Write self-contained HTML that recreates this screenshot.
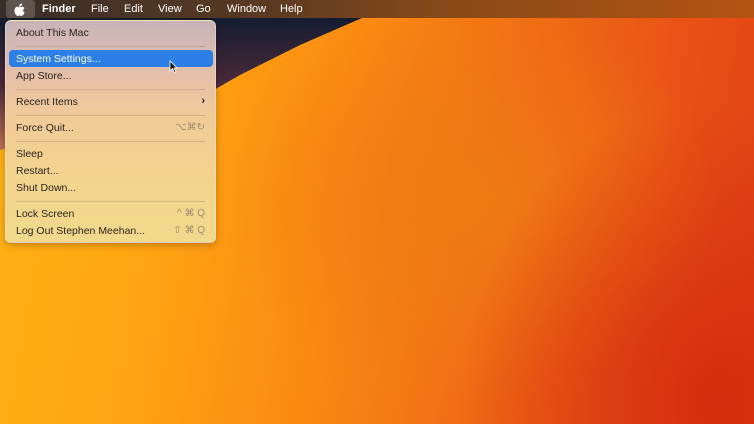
<!DOCTYPE html>
<html><head><meta charset="utf-8"><style>
*{margin:0;padding:0;box-sizing:border-box}
body{width:754px;height:424px;overflow:hidden;position:relative;font-family:"Liberation Sans",sans-serif;
background:radial-gradient(ellipse 260px 300px at 720px 400px,#d42e0e 0%,rgba(212,46,14,0) 100%),
radial-gradient(ellipse 250px 200px at 470px 200px,#f07a14 0%,rgba(240,122,20,0) 100%),
linear-gradient(100deg,#ffb414 0%,#ffa212 25%,#fa8a12 45%,#f06c14 65%,#e85016 85%,#e04014 100%);}
#bar{position:absolute;left:0;top:0;width:754px;height:18px;background:linear-gradient(90deg,#3a2e28 0%,#5a3a22 35%,#8a4a18 60%,#b45412 100%);color:#fff;font-size:11px;}
#bar span{position:absolute;top:3px}
#menu{position:absolute;left:5px;top:20px;width:211px;height:223px;border-radius:6px;
background:linear-gradient(180deg,#c7b4b9 0%,#e6c0a8 25%,#f2cb98 45%,#f3d48e 70%,#f2d98c 100%);
box-shadow:0 2px 8px rgba(0,0,0,0.25);border:1px solid rgba(255,255,255,0.3)}
.it{position:absolute;left:10px;font-size:10.5px;color:#2a2420}
.sc{position:absolute;right:10px;font-size:10px;color:#9c8c72}
.sep{position:absolute;left:10px;right:10px;height:1px;background:rgba(120,100,80,0.25)}
#hl{position:absolute;left:3px;top:29px;width:204px;height:17px;background:#2b7fe6;border-radius:4px}
</style></head><body>
<svg style="position:absolute;left:0;top:0" width="754" height="424">
<defs><linearGradient id="d" x1="0" y1="0" x2="0" y2="1"><stop offset="0" stop-color="#141c30"/><stop offset="0.5" stop-color="#4a2a3a"/><stop offset="1" stop-color="#c07050"/></linearGradient></defs>
<polygon points="0,18 362,18 300,45 240,75 205,95 0,150" fill="url(#d)"/>
</svg>
<div id="bar">
<div style="position:absolute;left:6px;top:0;width:29px;height:18px;background:rgba(255,255,255,0.18);border-radius:3px"></div>
<svg style="position:absolute;left:14px;top:3px" width="12" height="13" viewBox="0 0 12 14"><path fill="#fff" d="M8.2 0.5c0.1 1-0.3 1.9-0.9 2.5-0.6 0.7-1.4 1.1-2.2 1-0.1-0.9 0.3-1.9 0.9-2.5 0.6-0.6 1.5-1 2.2-1zM11 10.2c-0.3 0.8-0.7 1.5-1.2 2.2-0.6 0.8-1.2 1.6-2.1 1.6s-1.1-0.5-2.1-0.5-1.3 0.5-2.1 0.5c-0.9 0-1.6-0.9-2.2-1.7C0.1 10.6-0.5 7.6 0.7 5.7 1.3 4.7 2.3 4.1 3.3 4.1c0.9 0 1.6 0.6 2.3 0.6s1.6-0.7 2.7-0.6c0.5 0 1.8 0.2 2.6 1.4-2.2 1.3-1.8 4.3 0.1 4.7z"/></svg>
<span style="left:42px;font-weight:bold">Finder</span>
<span style="left:91px">File</span>
<span style="left:124px">Edit</span>
<span style="left:158px">View</span>
<span style="left:196px">Go</span>
<span style="left:227px">Window</span>
<span style="left:280px">Help</span>
</div>
<div id="menu">
<div class="it" style="top:6px">About This Mac</div>
<div class="sep" style="top:25px"></div>
<div id="hl"></div>
<div class="it" style="top:32px;color:#fff">System Settings...</div>
<div class="it" style="top:49px">App Store...</div>
<div class="sep" style="top:68px"></div>
<div class="it" style="top:75px">Recent Items</div>
<div class="sc" style="top:74px;color:#2a2420;font-size:11px;font-weight:bold">›</div>
<div class="sep" style="top:94px"></div>
<div class="it" style="top:101px">Force Quit...</div>
<div class="sc" style="top:101px">⌥⌘↻</div>
<div class="sep" style="top:120px"></div>
<div class="it" style="top:127px">Sleep</div>
<div class="it" style="top:144px">Restart...</div>
<div class="it" style="top:161px">Shut Down...</div>
<div class="sep" style="top:180px"></div>
<div class="it" style="top:187px">Lock Screen</div>
<div class="sc" style="top:187px">^ ⌘ Q</div>
<div class="it" style="top:204px">Log Out Stephen Meehan...</div>
<div class="sc" style="top:204px">⇧ ⌘ Q</div>
</div>
<svg style="position:absolute;left:169px;top:60px" width="9" height="14" viewBox="0 0 9 14"><path d="M1 1 L1 11 L3.5 8.5 L5.5 13 L7 12.3 L5 8 L8 8 Z" fill="#111" stroke="#fff" stroke-width="0.8"/></svg>
</body></html>
